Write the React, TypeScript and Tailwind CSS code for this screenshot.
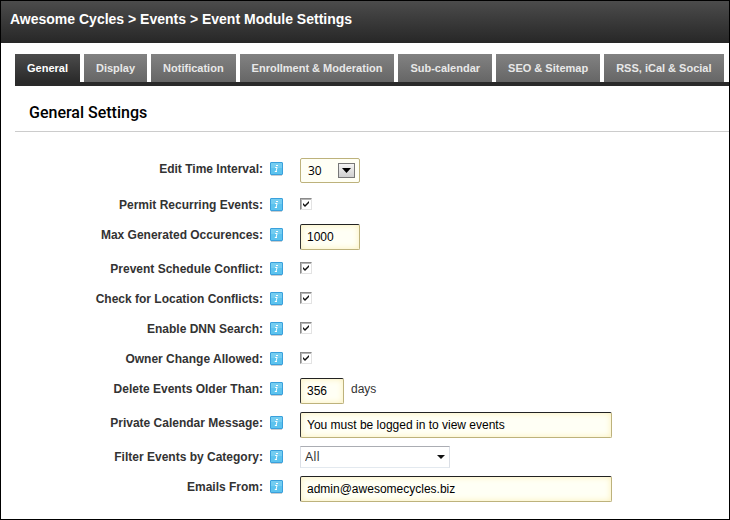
import { useState, type ReactNode } from "react";

const tabs = [
  "General",
  "Display",
  "Notification",
  "Enrollment & Moderation",
  "Sub-calendar",
  "SEO & Sitemap",
  "RSS, iCal & Social",
];

function InfoIcon() {
  return (
    <svg width="13" height="15" viewBox="0 0 13 15" aria-hidden="true" className="shrink-0">
      <rect x="1" y="13" width="11" height="1" fill="#c9ced2" />
      <rect x="0.5" y="0.5" width="12" height="12" rx="0.5" fill="#5cc3ee" stroke="#3aa0dc" />
      <rect x="1" y="1" width="11" height="5" fill="#74cdf1" />
      <rect x="6" y="3" width="2" height="1" fill="#fff" />
      <path d="M5.2 5.5h1.9L6 9.5M4.8 9.5h2.2" fill="none" stroke="#fff" strokeWidth="1" />
    </svg>
  );
}

function Row({ id, label, tall, children }: { id: string; label: string; tall?: boolean; children: ReactNode }) {
  return (
    <div className={tall ? "flex min-h-7 items-start" : "flex items-start"}>
      <div className="flex h-[22px] w-[268px] shrink-0 items-center justify-end gap-[7px]">
        <label htmlFor={id} className="text-right text-xs font-bold whitespace-nowrap text-[#333]">
          {label}:
        </label>
        <InfoIcon />
      </div>
      <div className="ml-[17px] flex min-w-0 flex-1 items-start">{children}</div>
    </div>
  );
}

function Check({ id, label }: { id: string; label: string }) {
  return (
    <Row id={id} label={label}>
      <span className="relative mt-1 block size-3">
        <input
          id={id}
          type="checkbox"
          defaultChecked
          className="peer block size-3 appearance-none border border-t-[#8a8a8a] border-r-[#e3e3e3] border-b-[#e3e3e3] border-l-[#8a8a8a] bg-white shadow-[inset_1px_1px_0_#b4b4b4]"
        />
        <svg
          width="12"
          height="12"
          viewBox="0 0 12 12"
          aria-hidden="true"
          className="pointer-events-none absolute inset-0 hidden peer-checked:block"
        >
          <path d="M3 5v2L5 9l4-4V3L5 7z" fill="#111" />
        </svg>
      </span>
    </Row>
  );
}

function TextField({ id, label, value, width, suffix }: { id: string; label: string; value: string; width: string; suffix?: string }) {
  return (
    <Row id={id} label={label}>
      <input
        id={id}
        type="text"
        defaultValue={value}
        className={
          "h-[26px] min-w-0 rounded-xs border border-t-[#222] border-r-[#bdb27c] border-b-[#bdb27c] border-l-[#333] bg-[#fffff5] px-[6px] text-xs text-black shadow-[inset_0_0_6px_#fbefb8] outline-none " +
          width
        }
      />
      {suffix && <span className="ml-[7px] text-xs leading-[22px] text-[#333]">{suffix}</span>}
    </Row>
  );
}

export default function App() {
  const [active, setActive] = useState("General");
  return (
    <div className="flex min-h-screen flex-col overflow-hidden border border-black bg-white font-['Liberation_Sans',Arial,sans-serif]">
      <header className="flex h-[42px] items-center bg-linear-to-b from-[#4c4c4c] to-[#272727] px-[9px] pb-[6px]">
        <h1 className="text-sm font-bold whitespace-nowrap text-white">
          Awesome Cycles &gt; Events &gt; Event Module Settings
        </h1>
      </header>
      <main className="pt-[11px] pl-[14px]">
        <nav className="flex gap-1 overflow-hidden border-b-4 border-[#2a2a2a]">
          {tabs.map((t) => (
            <button
              key={t}
              type="button"
              onClick={() => setActive(t)}
              className={
                t === active
                  ? "h-7 shrink-0 bg-linear-to-b from-[#4c4c4c] to-[#2a2a2a] px-3 text-[11px] font-bold whitespace-nowrap text-white"
                  : "h-7 shrink-0 bg-linear-to-b from-[#828282] to-[#666] px-3 text-[11px] font-bold whitespace-nowrap text-[#e8e8e8]"
              }
            >
              {t}
            </button>
          ))}
        </nav>
        <h2 className="border-b border-[#ccc] pt-[15px] pb-[6px] pl-[14px] font-[Roboto,sans-serif] text-base leading-6 font-medium text-black">
          General Settings
        </h2>
        <form className="flex flex-col gap-2 pt-[26px]">
          <Row id="interval" label="Edit Time Interval" tall>
            <span className="relative block w-[60px]">
              <select
                id="interval"
                defaultValue="30"
                className="block h-[25px] w-full appearance-none rounded-xs border border-[#bdb27c] bg-[#fffff5] pl-[7px] font-['Open_Sans',sans-serif] text-xs text-black outline-none"
              >
                <option>15</option>
                <option>30</option>
                <option>60</option>
              </select>
              <span className="pointer-events-none absolute top-[5px] right-[5px] flex h-[15px] w-[17px] items-center justify-center border border-[#777] bg-linear-to-b from-[#f4f4f4] to-[#cfcfcf]">
                <svg width="9" height="5" viewBox="0 0 9 5" aria-hidden="true">
                  <path d="M0 0h9L4.5 5z" fill="#000" />
                </svg>
              </span>
            </span>
          </Row>
          <Check id="recurring" label="Permit Recurring Events" />
          <TextField id="max" label="Max Generated Occurences" value="1000" width="w-[60px]" />
          <Check id="conflict" label="Prevent Schedule Conflict" />
          <Check id="location" label="Check for Location Conflicts" />
          <Check id="search" label="Enable DNN Search" />
          <Check id="owner" label="Owner Change Allowed" />
          <TextField id="older" label="Delete Events Older Than" value="356" width="w-[44px]" suffix="days" />
          <TextField id="message" label="Private Calendar Message" value="You must be logged in to view events" width="w-[312px]" />
          <Row id="category" label="Filter Events by Category">
            <span className="relative block w-[150px]">
              <select
                id="category"
                defaultValue="All"
                className="block h-[22px] w-full appearance-none border border-t-[#abadb3] border-r-[#dbdfe6] border-b-[#e3e9ef] border-l-[#dbdfe6] bg-white pl-1 font-['Open_Sans',sans-serif] text-[13px] text-[#333] outline-none"
              >
                <option>All</option>
              </select>
              <svg
                width="8"
                height="4"
                viewBox="0 0 8 4"
                aria-hidden="true"
                className="pointer-events-none absolute top-[9px] right-[5px]"
              >
                <path d="M0 0h8L4 4z" fill="#111" />
              </svg>
            </span>
          </Row>
          <TextField id="email" label="Emails From" value="admin@awesomecycles.biz" width="w-[312px]" />
        </form>
      </main>
    </div>
  );
}
